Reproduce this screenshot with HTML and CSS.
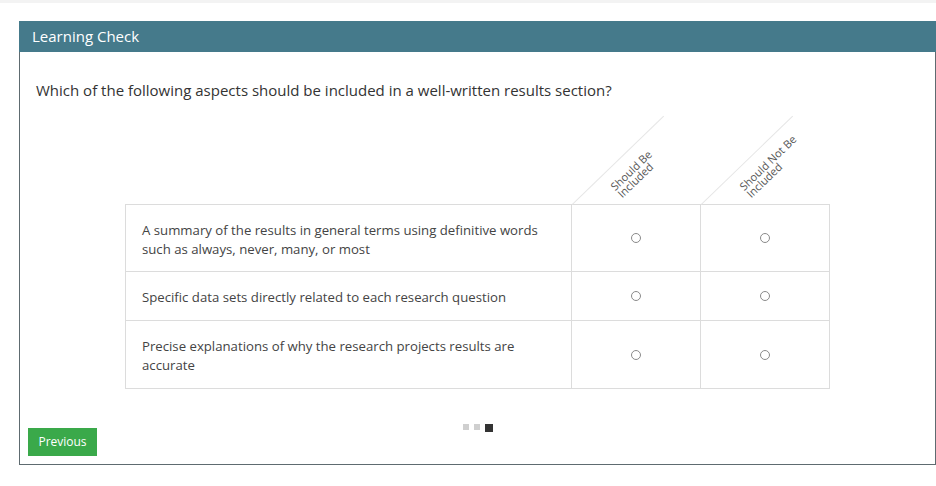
FILE: index.html
```html
<!DOCTYPE html>
<html lang="en">
<head>
  <meta charset="UTF-8">
  <title>Learning Check</title>
  <link rel="stylesheet" href="styles.css">
</head>
<body>
  <div class="panel">
    <div class="panel-header">Learning Check</div>
    <div class="panel-body">
      <p class="question">Which of the following aspects should be included in a well-written results section?</p>

      <table class="matrix">
        <thead>
          <tr>
            <th class="blank"></th>
            <th class="col"><div class="diag"><span>Should Be<br>Included</span></div></th>
            <th class="col"><div class="diag"><span>Should Not Be<br>Included</span></div></th>
          </tr>
        </thead>
        <tbody>
          <tr>
            <td class="stmt">A summary of the results in general terms using definitive words such as always, never, many, or most</td>
            <td class="opt"><span class="radio"></span></td>
            <td class="opt"><span class="radio"></span></td>
          </tr>
          <tr>
            <td class="stmt">Specific data sets directly related to each research question</td>
            <td class="opt"><span class="radio"></span></td>
            <td class="opt"><span class="radio"></span></td>
          </tr>
          <tr>
            <td class="stmt">Precise explanations of why the research projects results are accurate</td>
            <td class="opt"><span class="radio"></span></td>
            <td class="opt"><span class="radio"></span></td>
          </tr>
        </tbody>
      </table>

      <div class="footer">
        <button class="btn-prev">Previous</button>
        <div class="pager">
          <span class="dot"></span>
          <span class="dot"></span>
          <span class="dot active"></span>
        </div>
      </div>
    </div>
  </div>
</body>
</html>
```

FILE: styles.css
```css
* {
  box-sizing: border-box;
  margin: 0;
  padding: 0;
}

body {
  font-family: 'Open Sans', sans-serif;
  background: #fff;
  color: #333;
  border-top: 3px solid #f3f3f3;
}

.panel {
  margin: 18px 0 0 19px;
  width: 917px;
}

.panel-header {
  background: #457a8b;
  color: #fff;
  font-size: 15px;
  height: 31px;
  line-height: 31px;
  padding-left: 13px;
}

.panel-body {
  border: 1px solid #5e6b70;
  border-top: none;
  padding: 28px 0 8px 0;
}

.question {
  font-size: 15px;
  line-height: 20px;
  padding-left: 16px;
  color: #333;
}

/* Tableau de choix */
.matrix {
  border-collapse: collapse;
  margin: 8px 0 0 105px;
  width: 705px;
  table-layout: fixed;
}

.matrix th {
  height: 96px;
  font-weight: normal;
}

.matrix th.blank {
  width: 445px;
}

.matrix th.col {
  position: relative;
  width: 129px;
}

.diag {
  position: absolute;
  left: 1px;
  top: 100%;
  width: 127px;
  border-top: 1px solid #e6e6e6;
  transform-origin: top left;
  transform: rotate(-44deg);
  text-align: left;
  padding: 11px 0 0 40px;
}

.diag span {
  display: block;
  font-size: 11px;
  line-height: 10px;
  color: #555;
  white-space: nowrap;
}

.matrix td {
  border: 1px solid #dcdcdc;
  font-size: 13.2px;
  line-height: 19px;
  color: #444;
}

.stmt {
  padding: 16px 16px 13px 16px;
}

.matrix tr:first-child .stmt {
  padding-bottom: 12px;
}

.opt {
  text-align: center;
  vertical-align: middle;
}

.radio {
  display: inline-block;
  width: 10px;
  height: 10px;
  border: 1px solid #8a8a8a;
  border-radius: 50%;
  vertical-align: middle;
}

.footer {
  display: grid;
  grid-template-columns: 1fr auto 1fr;
  margin-top: 35px;
  padding: 0 8px;
}

.btn-prev {
  justify-self: start;
  margin-top: 4px;
  background: #3aa94a;
  color: #fff;
  border: none;
  font-family: 'Open Sans', sans-serif;
  font-size: 12px;
  width: 69px;
  height: 28px;
}

.pager {
  display: flex;
  align-items: flex-start;
  gap: 5px;
}

.dot {
  width: 6px;
  height: 6px;
  background: #cfcfcf;
}

.dot.active {
  width: 8px;
  height: 8px;
  background: #333;
}
```
